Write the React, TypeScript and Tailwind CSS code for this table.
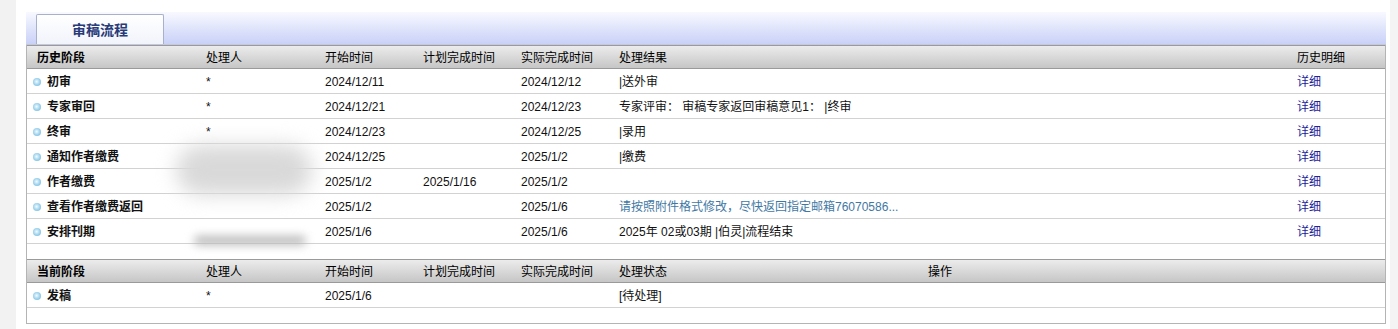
import React from "react";

type Row = {
  stage: string;
  handler: string;
  start: string;
  plan: string;
  done: string;
  result: string;
  resultTone?: "link";
};

const history: Row[] = [
  { stage: "初审", handler: "*", start: "2024/12/11", plan: "", done: "2024/12/12", result: "|送外审" },
  { stage: "专家审回", handler: "*", start: "2024/12/21", plan: "", done: "2024/12/23", result: "专家评审： 审稿专家返回审稿意见1： |终审" },
  { stage: "终审", handler: "*", start: "2024/12/23", plan: "", done: "2024/12/25", result: "|录用" },
  { stage: "通知作者缴费", handler: "", start: "2024/12/25", plan: "", done: "2025/1/2", result: "|缴费" },
  { stage: "作者缴费", handler: "", start: "2025/1/2", plan: "2025/1/16", done: "2025/1/2", result: "" },
  {
    stage: "查看作者缴费返回",
    handler: "",
    start: "2025/1/2",
    plan: "",
    done: "2025/1/6",
    result: "请按照附件格式修改，尽快返回指定邮箱76070586...",
    resultTone: "link",
  },
  { stage: "安排刊期", handler: "", start: "2025/1/6", plan: "", done: "2025/1/6", result: "2025年 02或03期 |伯灵|流程结束" },
];

const cols = "grid grid-cols-[173px_119px_98px_98px_98px_678px_1fr]";
const cols2 = "grid grid-cols-[173px_119px_98px_98px_98px_309px_1fr]";
const headRow =
  "h-[24px] items-center pt-[2px] border-y border-[#9a9a9a] bg-gradient-to-b from-[#ececec] to-[#c6c6c6] text-black";
const bodyRow = "h-[25px] items-center pt-[2px] border-b border-[#d2d2d2] text-[#111]";

function Dot() {
  return (
    <span className="inline-block h-[8px] w-[8px] shrink-0 rounded-full bg-[radial-gradient(circle_at_45%_45%,#f2fbff_0%,#a8d8ef_45%,#62aed6_100%)]" />
  );
}

function Stage({ label }: { label: string }) {
  return (
    <div className="flex items-center gap-[6px] pl-[6px] font-bold">
      <Dot />
      <span>{label}</span>
    </div>
  );
}

export default function App() {
  return (
    <div className="flex h-[329px] w-[1398px] bg-white font-['Liberation_Sans','Noto_Sans_CJK_SC',sans-serif] text-[12px]">
      <div className="w-[16px] shrink-0 bg-[#f2f2f2]" />
      <div className="w-[10px] shrink-0" />

      <div className="relative mt-[12px] w-[1360px] shrink-0">
        {/* tab bar */}
        <div className="flex h-[33px] items-end border-b border-[#c4c8dc] bg-gradient-to-b from-[#f8f9ff] to-[#c9d1f7] pl-[10px]">
          <div className="flex h-[30px] w-[128px] items-center justify-center rounded-t-[2px] border border-b-0 border-[#a9b0cc] bg-gradient-to-b from-white to-[#f2f4fc] pt-[1px] text-[14px] font-bold text-[#283a78]">
            审稿流程
          </div>
        </div>

        <div className="border-x border-b border-[#b4b4b4]">
          {/* history header */}
          <div className={`${cols} ${headRow}`}>
            <div className="pl-[10px] font-bold">历史阶段</div>
            <div className="pl-[6px]">处理人</div>
            <div className="pl-[6px]">开始时间</div>
            <div className="pl-[6px]">计划完成时间</div>
            <div className="pl-[6px]">实际完成时间</div>
            <div className="pl-[6px]">处理结果</div>
            <div className="pl-[6px]">历史明细</div>
          </div>

          {history.map((r) => (
            <div key={r.stage} className={`${cols} ${bodyRow}`}>
              <Stage label={r.stage} />
              <div className="pl-[6px]">{r.handler}</div>
              <div className="pl-[6px]">{r.start}</div>
              <div className="pl-[6px]">{r.plan}</div>
              <div className="pl-[6px]">{r.done}</div>
              <div className={`whitespace-pre pl-[6px] ${r.resultTone === "link" ? "text-[#3f78a4]" : ""}`}>
                {r.result}
              </div>
              <div className="pl-[6px] text-[#1c239c]">详细</div>
            </div>
          ))}

          <div className="h-[15px]" />

          {/* current stage */}
          <div className={`${cols2} ${headRow}`}>
            <div className="pl-[10px] font-bold">当前阶段</div>
            <div className="pl-[6px]">处理人</div>
            <div className="pl-[6px]">开始时间</div>
            <div className="pl-[6px]">计划完成时间</div>
            <div className="pl-[6px]">实际完成时间</div>
            <div className="pl-[6px]">处理状态</div>
            <div className="pl-[6px]">操作</div>
          </div>
          <div className={`${cols2} ${bodyRow}`}>
            <Stage label="发稿" />
            <div className="pl-[6px]">*</div>
            <div className="pl-[6px]">2025/1/6</div>
            <div className="pl-[6px]"></div>
            <div className="pl-[6px]"></div>
            <div className="pl-[6px]">[待处理]</div>
            <div />
          </div>
          <div className="h-[15px]" />
        </div>

        {/* redaction smudge */}
        <div className="pointer-events-none absolute left-[150px] top-[133px] h-[50px] w-[136px] rounded-[25px] bg-[#d9d9d9] blur-[10px]" />
        <div className="pointer-events-none absolute left-[168px] top-[224px] h-[9px] w-[112px] rounded-full bg-[#b8b8b8] blur-[5px]" />
      </div>

      <div className="ml-auto w-[8px] bg-[#f4f4f4]" />
    </div>
  );
}
